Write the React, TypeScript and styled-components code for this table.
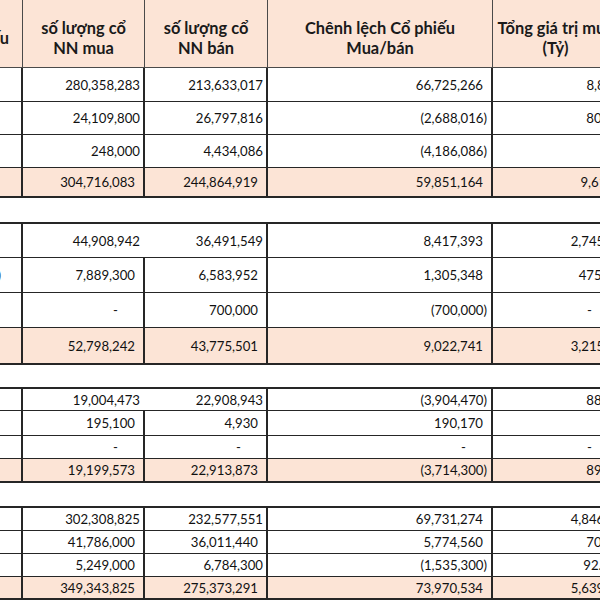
import React from "react";
import styled, { createGlobalStyle } from "styled-components";

const GlobalStyle = createGlobalStyle`
  html, body { margin: 0; padding: 0; background: #ffffff; }
  body { font-family: Lato, "Open Sans", sans-serif; color: #111111; }
`;

const COLS = "111px 122px 123px 225px 138px";
const LINE = "#262626";
const PEACH = "#fce4d6";

const Viewport = styled.div`
  width: 600px;
  height: 600px;
  overflow: hidden;
`;

const Sheet = styled.div`
  margin-left: -88px;
  width: max-content;
  font-size: 13.2px;
`;

const HeaderRow = styled.div`
  display: grid;
  grid-template-columns: ${COLS};
  height: 68px;
  box-sizing: border-box;
  background: ${PEACH};
  border-bottom: 1px solid #4a4a4a;
`;

const HeaderCell = styled.div<{ $shift?: number }>`
  display: flex;
  flex-direction: column;
  align-items: center;
  justify-content: center;
  box-sizing: border-box;
  padding-top: 8px;
  padding-right: ${(p) => p.$shift ?? 0}px;
  border-right: 1px solid #4a4a4a;
  font-size: 16.4px;
  font-weight: 700;
  line-height: 20px;
  white-space: nowrap;
  text-align: center;
  color: #1a1a1a;
`;

const Section = styled.div<{ $gap: number; $top: boolean }>`
  margin-top: ${(p) => p.$gap}px;
  border-top: ${(p) => (p.$top ? `2px solid ${LINE}` : "none")};
  border-bottom: 2px solid ${LINE};
`;

const Row = styled.div<{ $h: number; $total?: boolean }>`
  display: grid;
  grid-template-columns: ${COLS};
  height: ${(p) => p.$h}px;
  box-sizing: border-box;
  background: ${(p) => (p.$total ? PEACH : "#ffffff")};
  & + & {
    border-top: ${(p) => (p.$total ? "1px" : "2px")} solid ${LINE};
  }
`;

const Cell = styled.div<{ $pad: number; $open?: boolean }>`
  display: flex;
  align-items: center;
  justify-content: flex-end;
  box-sizing: border-box;
  padding-right: ${(p) => p.$pad}px;
  border-right: 2px solid ${(p) => (p.$open ? "transparent" : LINE)};
  white-space: nowrap;
`;

const LabelCell = styled.div`
  display: flex;
  align-items: center;
  justify-content: flex-end;
  box-sizing: border-box;
  padding-right: 20px;
  border-right: 2px solid ${LINE};
  white-space: nowrap;
`;

type V = [string, number];
type RowData = { h: number; total?: boolean; open?: boolean; label?: string; cells: V[] };
type SectionData = { gap: number; top: boolean; rows: RowData[] };

const sections: SectionData[] = [
  {
    gap: 0,
    top: false,
    rows: [
      { h: 33, cells: [["280,358,283", 3], ["213,633,017", 3], ["66,725,266", 8], ["8,806", 9]] },
      { h: 33, cells: [["24,109,800", 3], ["26,797,816", 3], ["(2,688,016)", 4], ["803.9", 9]] },
      { h: 33, cells: [["248,000", 3], ["4,434,086", 3], ["(4,186,086)", 4], ["", 9]] },
      { h: 29, total: true, cells: [["304,716,083", 8], ["244,864,919", 8], ["59,851,164", 8], ["9,612", 15]] },
    ],
  },
  {
    gap: 24,
    top: true,
    rows: [
      { h: 33, open: true, cells: [["44,908,942", 3], ["36,491,549", 3], ["8,417,393", 8], ["2,745.5", 14]] },
      { h: 35, label: "Chứng chỉ quỹ (ETF)", cells: [["7,889,300", 8], ["6,583,952", 8], ["1,305,348", 8], ["475.66", 9]] },
      { h: 35, cells: [["-", 25], ["700,000", 8], ["(700,000)", 4], ["-", 37]] },
      { h: 36, total: true, cells: [["52,798,242", 8], ["43,775,501", 8], ["9,022,741", 8], ["3,215.4", 14]] },
    ],
  },
  {
    gap: 22,
    top: true,
    rows: [
      { h: 21, open: true, cells: [["19,004,473", 3], ["22,908,943", 3], ["(3,904,470)", 4], ["885.2", 9]] },
      { h: 25, cells: [["195,100", 8], ["4,930", 8], ["190,170", 8], ["", 9]] },
      { h: 23, cells: [["-", 25], ["-", 25], ["-", 25], ["-", 37]] },
      { h: 23, total: true, cells: [["19,199,573", 8], ["22,913,873", 8], ["(3,714,300)", 4], ["893.1", 9]] },
    ],
  },
  {
    gap: 23,
    top: true,
    rows: [
      { h: 22, cells: [["302,308,825", 3], ["232,577,551", 3], ["69,731,274", 8], ["4,846.5", 14]] },
      { h: 23, cells: [["41,786,000", 8], ["36,011,440", 8], ["5,774,560", 8], ["701.4", 9]] },
      { h: 23, cells: [["5,249,000", 8], ["6,784,300", 3], ["(1,535,300)", 4], ["92.63", 12]] },
      { h: 22, total: true, cells: [["349,343,825", 8], ["275,373,291", 8], ["73,970,534", 8], ["5,639.2", 14]] },
    ],
  },
];

export default function App() {
  return (
    <Viewport>
      <GlobalStyle />
      <Sheet>
        <HeaderRow>
          <HeaderCell $shift={12}>Loại cổ phiếu</HeaderCell>
          <HeaderCell>
            <span>số lượng cổ</span>
            <span>NN mua</span>
          </HeaderCell>
          <HeaderCell>
            <span>số lượng cổ</span>
            <span>NN bán</span>
          </HeaderCell>
          <HeaderCell>
            <span>Chênh lệch Cổ phiếu</span>
            <span>Mua/bán</span>
          </HeaderCell>
          <HeaderCell $shift={12}>
            <span>Tổng giá trị mua</span>
            <span>(Tỷ)</span>
          </HeaderCell>
        </HeaderRow>
        {sections.map((s, si) => (
          <Section key={si} $gap={s.gap} $top={s.top}>
            {s.rows.map((r, ri) => (
              <Row key={ri} $h={r.h} $total={r.total}>
                <LabelCell>{r.label ?? ""}</LabelCell>
                {r.cells.map(([v, pad], ci) => (
                  <Cell key={ci} $pad={pad} $open={r.open && ci === 0}>
                    {v}
                  </Cell>
                ))}
              </Row>
            ))}
          </Section>
        ))}
      </Sheet>
    </Viewport>
  );
}
